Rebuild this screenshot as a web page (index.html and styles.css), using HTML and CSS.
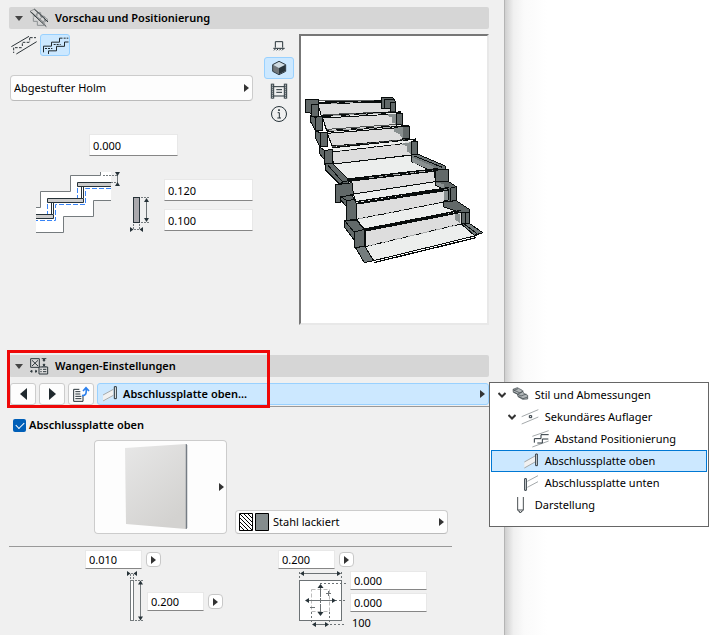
FILE: index.html
```html
<!DOCTYPE html>
<html lang="de">
<head>
<meta charset="utf-8">
<meta name="viewport" content="width=device-width, initial-scale=1">
<title>Wangen-Einstellungen</title>
<link rel="stylesheet" href="styles.css">
</head>
<body>
<main class="panel">
  <section class="preview">
    <h2 class="section-head">
      <span class="caret"></span>
      <svg width="20" height="20" viewBox="87 24 60 60" fill="none" stroke="#30383c" stroke-width="3"><path d="M90 34l12-6 42 31-12 8zM96 38l40 34M104 48l14-12M116 60l14-12M126 68l14-12" stroke="#96999a"/><path d="M98 48h13v-10h11v12h12v12h10M100 52v12h12v12h20" stroke="#8b9092"/><path d="M91 35l48 45M103 27l41 39"/></svg>
      Vorschau und Positionierung
    </h2>
    <div class="preview-body">
      <div class="controls">
        <div class="modes">
          <button class="mode" aria-label="Gerader Holm"><svg width="28" height="20" viewBox="32 104 84 60" fill="none" stroke="#2c3438" stroke-width="3"><path d="M33 139L86 108M48 161l61-37"/><path d="M89 112h18M88 112v13M87 126H66v14M64 142H40v16" stroke-dasharray="8 4"/></svg></button>
          <button class="mode active" aria-label="Abgestufter Holm"><svg width="28" height="20" viewBox="120 103 84 60" fill="none" stroke="#20292e" stroke-width="3"><path d="M127.500 155v-18.500h24v-12h24v-12h9M142.500 160v-9.500h24v-13.500h24v-13h12"/><path d="M188 112.500h14M132 143.500h22M158 131.500h21" stroke-dasharray="6 3"/></svg></button>
        </div>
        <div class="select wide"><select aria-label="Holmtyp"><option>Abgestufter Holm</option></select></div>
        <input class="field offset" aria-label="Abstand" value="0.000">
        <div class="dims">
          <svg width="84" height="64" viewBox="36 170 84 64" fill="none" stroke="#263238">
            <path d="M36 208h4.500v-16.500h30v-16h30V172H111v28.500H93.500v16h-30v16H36z" fill="#fff" stroke="none"/>
            <path d="M36 207.500h4.500v-16h30v-16h30V172M36 232.500h27.500v-16h30v-16H111" stroke="#757b7e"/>
            <path d="M111 182.500H77.500v4H111M83.500 198.500h-36v4h36zM36 214.500h17.500v4H36" fill="#ccc"/>
            <path d="M81.500 187v11M83.500 187v11M51.500 203v11M53.500 203v11"/>
            <path d="M77.500 188v10M47.500 204v10M111 188.500H85.500v16h-30v16H36" stroke="#3884f7" stroke-dasharray="5 2"/>
            <path d="M103 175.500h14M111 182.500h6" stroke="#757b7e" stroke-dasharray="2 1"/><path d="M117.500 175v8" stroke="#757b7e"/>
            <path d="M115 172h5l-2.500 4zM115 186h5l-2.500-4z" fill="#263238" stroke="none"/>
          </svg>
          <svg class="section-icon" width="20" height="38" viewBox="130 195 20 38" fill="none" stroke="#263238">
            <rect x="133.500" y="197.500" width="6" height="25" fill="#aaa9ad"/>
            <path d="M141 197.500h9M141 222.500h9M133.500 224v6M139.500 224v6M134 229.500h6" stroke="#757b7e" stroke-dasharray="2 1"/><path d="M146.500 199v22" stroke="#6b7174"/>
            <path d="M144 202h5l-2.500-4zM144 218h5l-2.500 4zM130 227v5l3.500-2.500zM143 227v5l-3.500-2.500z" fill="#263238" stroke="none"/>
          </svg>
          <div class="stack"><input class="field" aria-label="Höhe" value="0.120"><input class="field" aria-label="Breite" value="0.100"></div>
        </div>
      </div>
      <div class="views">
        <button aria-label="Seitenansicht"><svg width="30" height="22" viewBox="27 12 90 66" fill="none" stroke="#263238" stroke-width="3"><path d="M61 53V35h22v18M55 55h34"/><path d="M57 61l4-4M65 61l4-4M73 61l4-4M81 61l4-4"/></svg></button>
        <button class="active" aria-label="3D-Ansicht"><svg width="28" height="20" viewBox="30 85 84 60"><path d="M72 96l19 9-19 10-18-10z" fill="#d0dbe1"/><path d="M54 105l18 10v19l-18-9z" fill="#72777a"/><path d="M91 105l-19 10v19l19-10z" fill="#29343b"/><path d="M72 95l20 10v20l-20 10-19-10v-20z" fill="none" stroke="#29343b" stroke-width="3"/></svg></button>
        <button aria-label="Darstellung"><svg width="30" height="22" viewBox="27 151 90 66" fill="none" stroke="#263238" stroke-width="3"><path d="M49 162v45M56 162v45M88 162v45M95 162v45M56 171h32M56 199h32M64 180h17M64 188h17"/><path d="M52.500 162v45M91.500 162v45" stroke-dasharray="3 3"/></svg></button>
        <button aria-label="Information"><svg width="30" height="22" viewBox="27 219 90 66" fill="none" stroke="#263238" stroke-width="3"><circle cx="72" cy="252" r="22.500"/><path d="M68 248h5v16M67 264h11"/><path d="M72 238v5" stroke-width="5"/></svg></button>
      </div>
      <div class="viewport">
        <svg class="model" width="185" height="287" viewBox="15 18 555 861" stroke="#080c0c" stroke-width="3" shape-rendering="crispEdges">
          <g fill="#eceeed" stroke="none"><path d="M78 256l206-12 18 8-222 12zM92 300l216-14 14 8-228 16zM106 346l230-18 12 10-240 26z"/></g>
          <g fill="#ddd">
            <path d="M66 222L262 216h22v30L76 258zM80 264l220-12v36L92 302zM94 310l226-18v38l-212 18zM108 366l237-28v37l-233 27zM155 452l260-34 3 38-246 36zM180 520l270-42-5 40-263 50zM207 600l288-54v38L207 650z"/>
          </g>
          <g fill="#eceeed">
            <path d="M112 402l238-27 78 43-278 32zM172 492l246-37 44 20-282 45zM182 568l263-52 50 29-290 55zM207 650l288-68 45 35-307 75z"/>
          </g>
          <g fill="#626969">
            <path d="M28 208h38v50H46v-8l-18-4zM44 258l14 4 20-4v42H58l-14-24zM58 302l14 6 22-2v42H70l-12-26zM70 350l16 12 22-4 2 44H86V390l-16-20z"/>
            <path d="M88 402l22-2 48 50-3 12-23 2-44-44z"/><path d="M118 465l50-7 4 34-22 8-16 16h-16z"/>
            <path d="M134 500l34-4 12 24v50l-28 2v-42l-18-20zM146 572l32-4 28 30v52l-32 2v-22l-28-38z"/>
            <path d="M178 652l29-2 26 42-28 6z" fill="#757d7e"/>
            <path d="M256 202h34l8 12v32h-14v-10h-28zM300 250h20v36l-20-4zM320 290h20v36h-20zM345 334h19v40h-19z"/>
            <path d="M345 375l19-3 84 36v10l-33 8-70-32z" fill="#707879"/><path d="M418 420l40-2v37l-40 11z"/>
            <path d="M418 455h40l23 15v40l-19 5-17-5v-32l-27-12zM442 515l39-3 39 26v42l-24 2v-34l-54-18z"/>
            <path d="M496 582l24-2 40 28-25 8z" fill="#757d7e"/>
          </g>
          <g fill="#899090" stroke="none"><path d="M275 252l25-1v31l-12-4v-15l-13-5zM294 294l26-3v35l-10-14-16-8zM318 339l27-4v37l-13-9v-15l-14-4zM348 382l65 28v14l-65-28zM420 458l24 4v15l-24-12zM445 478h14v34l-14-3zM476 548l17 5v27l-17-12z"/></g>
          <g fill="none">
            <path d="M46 222v28M46 222h20M58 262v38M72 308v40M86 362v40M96 406l44 50 18-4M132 464l8-10M152 530v-18l28-4M134 500l18 12M174 606v46M174 606l32-8M146 572l28 34M264 208v28M264 208h26M284 236v-20h14M298 246l22 4M320 286l20 4M340 326l24 8M355 378l84 34M458 476v34M462 474v40M481 470l-19 5M496 548h24M508 546v34M496 582l39 34M502 580l42 32"/>
            <path d="M66 217l192-4M66 221l190-6M80 259l236-13M94 304l244-17M108 353l253-26M155 447l270-31M180 515l278-42M207 597l288-56M233 698l307-75" stroke-width="4"/>
            <path d="M106 220l90-5M110 258l150-9M100 302l200-12M120 348l200-18M120 362l220-25M210 445l180-22M190 567l240-46M220 646l260-60" stroke="#fff" stroke-width="2" stroke-dasharray="24 16"/>
            <path d="M66 213l192-2M80 254l220-9M94 298l226-16M108 349l237-22" stroke-width="2"/>
            <path d="M155 454l270-32M180 522l278-42M207 603l288-56" stroke-width="4"/>
          </g>
        </svg>
      </div>
    </div>
  </section>

  <section class="settings">
    <h2 class="section-head">
      <span class="caret"></span>
      <svg width="20" height="18" viewBox="87 36 60 54" fill="none" stroke="#2d373c" stroke-width="3"><path d="M92 41h26v26H92zM96 46l18 17M114 46L96 63M125 41h14M125 66h14M132 44v6M132 56v6M91 79h5M106 79h5"/><path d="M129 46h6l-3-4zM129 59h6l-3 4zM96 76v6l-4-3zM107 76v6l4-3z"/><path d="M117 66h26v21h-26z" fill="#ddd"/><path d="M121 73h4M129 73h10M121 80h4M129 80h10"/></svg>
      Wangen-Einstellungen
    </h2>
    <div class="pager">
      <button class="page" aria-label="Zurück"><i class="tri left"></i></button>
      <button class="page" aria-label="Weiter"><i class="tri"></i></button>
      <button class="page" aria-label="Seitenliste"><svg width="20" height="18" viewBox="212 120 60 54" fill="none" stroke="#263238" stroke-width="3"><path d="M237 133h-17v36h28v-17M225 140h15M225 147h15M225 154h18M225 161h18"/><path d="M245 152c13 0 13-7 13-23M248 138l9-10 9 10" stroke="#2c80ed" stroke-width="5"/></svg></button>
      <button class="page current" aria-haspopup="true"><svg width="17" height="18" viewBox="306 120 51 54" fill="none" stroke="#a5abae" stroke-width="3"><path d="M309 150l31-17v20l-31 17z" fill="#f1f1f1" stroke="none"/><path d="M309 150l31-17M309 168l31-17"/><path d="M343 125h6v36h-6z" fill="#fff" stroke="#263238"/></svg><span>Abschlussplatte oben...</span><i class="tri tiny"></i></button>
    </div>
    <div class="marker"></div>
    <label class="check"><input type="checkbox" checked>Abschlussplatte oben</label>
    <div class="material">
      <button class="swatch" aria-label="Material wählen"><svg width="133" height="94" viewBox="94 440 133 94"><defs><linearGradient id="plate" x2=".6" y2="1"><stop stop-color="#e7e7e7"/><stop offset="1" stop-color="#d3d2d0"/></linearGradient></defs><path d="M125 448l61-4v85l-60-5z" fill="url(#plate)"/><path d="M186 444l1 1v83l-1 1z" fill="#777c84" stroke="#777c84" stroke-width=".5"/></svg><i class="tri tiny"></i></button>
      <div class="select surface">
        <svg width="31" height="18" viewBox="0 0 31 18" stroke="#000"><path d="M.5.500h13v17H.5z" fill="#fff"/><path d="M1 13l4 4M1 9l8 8M1 5l12 12M1 1l12 12M5 1l8 8M9 1l4 4" stroke-width="1"/><path d="M16.500.500h13v17h-13z" fill="#848c8d"/></svg>
        <select aria-label="Oberfläche"><option>Stahl lackiert</option></select>
      </div>
    </div>
    <hr>
    <div class="plate-dims">
      <div class="group">
        <div class="line"><input class="field small" aria-label="Stärke" value="0.010"><button class="mini" aria-label="Stärke Optionen"><i class="tri tiny"></i></button></div>
        <div class="line tall">
          <svg width="20" height="54" viewBox="125 570 20 54" fill="none" stroke="#757b7e"><rect x="130.500" y="581.500" width="3" height="40" fill="#fff"/><path d="M130.500 575v6M133.500 575v6M135 581.500h8M135 621.500h8M131 574.500h4" stroke-dasharray="2 1"/><path d="M140.500 584v36"/><path d="M127 572v5l3.500-2.500zM137 572v5l-3.500-2.500zM138 585.500h5l-2.500-4zM138 617.500h5l-2.500 4z" fill="#263238" stroke="none"/></svg>
          <input class="field small" aria-label="Höhe der Platte" value="0.200"><button class="mini" aria-label="Höhe Optionen"><i class="tri tiny"></i></button>
        </div>
      </div>
      <div class="group">
        <div class="line"><input class="field small" aria-label="Breite der Platte" value="0.200"><button class="mini" aria-label="Breite Optionen"><i class="tri tiny"></i></button></div>
        <div class="line anchor">
          <svg width="49" height="60" viewBox="298 570 49 60" fill="none" stroke="#6c7275"><rect x="299.500" y="581.500" width="42" height="40" fill="#fff"/><path d="M299.500 573v7M341.500 573v7M311.500 613v12M329.500 613v12M320 584.500h26M335 601.500h11M330 625.500h16" stroke-dasharray="2 2"/><path d="M311.500 590.500h18v22h-18z" stroke="#bbb" stroke-dasharray="4 2"/><path d="M302 574.500h37M306 601.500h12M323 601.500h12M320.500 586v12M320.500 605v11M315 625.500h12M320.500 599v5M318 601.500h5M326 594.500h5M328.500 592v5M310 608.500h5"/><path d="M300 574.500l4-2.500v5zM341 574.500l-4-2.500v5zM305 601.500l4-2.500v5zM336 601.500l-4-2.500v5zM320.500 585l-3 4h6zM320.500 617l-3-4h6zM312 625.500l4-2.500v5zM329 625.500l-4-2.500v5z" fill="#263238" stroke="none"/></svg>
          <div class="stack tight"><input class="field mid" aria-label="Versatz X" value="0.000"><input class="field mid" aria-label="Versatz Y" value="0.000"><span class="angle">100</span></div>
        </div>
      </div>
    </div>
  </section>

  <ul class="menu" role="tree" aria-label="Seiten">
    <li role="treeitem" class="level-0"><svg class="chevron" width="8" height="8" viewBox="0 0 8 8"><path d="M.5 2l3.500 3.500L7.500 2"/></svg><svg width="20" height="18" viewBox="80 36 60 54" stroke="#394247" stroke-width="2" fill="#b0b5b7"><path d="M86 46l13-5 15 8 4 9 12 6v11l-15 1-14-8-2-8-12-5z"/><path d="M86 47l21 10 10-6M88 54l22 12 16-6M102 67l14 7 14-5M89 49l12-5M101 60l12-6" fill="none"/></svg>Stil und Abmessungen</li>
    <li role="treeitem" class="level-1"><svg class="chevron" width="8" height="8" viewBox="0 0 8 8"><path d="M.5 2l3.500 3.500L7.500 2"/></svg><svg width="20" height="18" viewBox="108 99 60 54" fill="none" stroke="#a4a9ab" stroke-width="3"><path d="M110 125l50-21M110 147l50-21"/><path d="M133 122h7v6h-7z" stroke="#29343b"/></svg>Sekundäres Auflager</li>
    <li role="treeitem" class="level-2"><svg width="20" height="18" viewBox="138 165 60 54" fill="none" stroke="#a4a9ab" stroke-width="3"><path d="M142 184l49-17M142 216l49-18"/><path d="M148 203v-12h20v-12h23M157 204h15v-12h18" stroke="#29343b"/></svg>Abstand Positionierung</li>
    <li role="treeitem" class="level-1 chosen" aria-selected="true"><svg width="20" height="18" viewBox="108 231 60 54" fill="none" stroke="#a4a9ab" stroke-width="3"><path d="M118 261l32-18v18l-32 18z" fill="#f1f1f1" stroke="none"/><path d="M118 261l32-18M118 279l32-18"/><path d="M152 237h5v35h-5z" fill="#fff" stroke="#29343b"/></svg>Abschlussplatte oben</li>
    <li role="treeitem" class="level-1"><svg width="20" height="18" viewBox="108 297 60 54" fill="none" stroke="#a4a9ab" stroke-width="3"><path d="M127 319l32-17M127 337l32-17"/><path d="M119 311h5v35h-5z" fill="#fff" stroke="#29343b"/></svg>Abschlussplatte unten</li>
    <li role="treeitem" class="level-0"><svg width="20" height="18" viewBox="78 363 60 54" fill="none" stroke="#4b5154" stroke-width="3"><path d="M98 366v39l8 9 9-9v-39M98 405h17M103 408l3 5 5-5"/></svg>Darstellung</li>
  </ul>
</main>
</body>
</html>
```
FILE: styles.css
```css
* { box-sizing: border-box; }
body {
  margin: 0;
  color: #000;
  background: linear-gradient(90deg, #cfcfcf, #f0f0f0 4%, #fafafa 9%, #fff 20%) no-repeat 100% 0 / 29.5% 100%;
  font: 11px/16px "Noto Sans", "Open Sans", sans-serif;
}
.panel {
  position: relative;
  width: 70.5%;
  min-width: 500px;
  min-height: 100vh;
  padding: 7px 15px 4px 9px;
  background: #f0f0f0;
  border-right: 1px solid #b4b4b4;
}
svg { display: block; flex: none; }
button, input, select { margin: 0; font: inherit; color: inherit; }
button { padding: 0; border: 0; background: none; }
.section-head {
  display: flex;
  align-items: center;
  height: 22px;
  margin: 0;
  padding-left: 6px;
  gap: 6px;
  background: #d6d6d6;
  border-radius: 2px;
  font-size: 11px;
  font-weight: 600;
}
.caret {
  border: solid transparent;
  border-width: 5px 4px 0;
  border-top-color: #444;
}
.preview-body { display: flex; margin-top: 5px; }
.controls { flex: 1; padding-left: 1px; }
.modes { display: flex; }
.mode { display: grid; place-items: center; width: 30px; height: 22px; border: 1px solid transparent; border-radius: 3px; }
.active { background: #cce8ff; border: 1px solid #99d1ff; border-radius: 3px; }
.select {
  position: relative;
  display: flex;
  align-items: center;
  background: #fdfdfd;
  border: 1px solid #ccc;
  border-bottom-color: #bbb;
  border-radius: 4px;
}
.select::after {
  content: "";
  position: absolute;
  right: 3px;
  border: solid transparent;
  border-width: 4px 0 4px 5px;
  border-left-color: #333;
}
.select select { flex: 1; min-width: 0; height: 100%; padding: 0 12px 0 3px; border: 0; background: none; appearance: none; }
.wide { height: 26px; margin-top: 19px; }
.surface { width: 213px; height: 24px; padding-left: 3px; }
.field {
  display: block;
  width: 89px;
  height: 22px;
  padding: 0 3px;
  border: 1px solid #e8e8e8;
  border-bottom-color: #868686;
  background: #fff;
  border-radius: 0;
}
.small { width: 57px; height: 19px; }
.mid { width: 77px; height: 19px; }
.offset { margin: 33px 0 0 79px; }
.dims { display: flex; gap: 10px; margin-top: 14px; padding-left: 26px; }
.section-icon { margin-top: 25px; }
.stack { display: flex; flex-direction: column; gap: 8px; padding: 9px 0 0 4px; }
.views { display: flex; flex-direction: column; gap: 1px; margin: 0 5px 0 11px; }
.views button { display: grid; place-items: center; width: 30px; height: 22px; }
.viewport {
  width: 190px;
  height: 291px;
  background: #fff;
  border: 2px solid;
  border-color: #777 #e8e8e8 #e8e8e8 #777;
}
.settings { position: relative; margin-top: 30px; }
.pager { display: flex; gap: 3px; padding: 6px 0 1px 1px; border-bottom: 1px solid #999; }
.page { display: grid; place-items: center; width: 26px; height: 22px; background: #fdfdfd; border: 1px solid #ccc; border-radius: 3px; }
.tri { border: solid transparent; border-width: 6px 0 6px 7px; border-left-color: #20292e; }
.tri.left { transform: rotate(180deg); }
.tri.tiny { border-width: 4px 0 4px 5px; border-left-color: #333; }
.current {
  display: flex;
  align-items: center;
  flex: 1;
  gap: 4px;
  padding: 0 3px 0 4px;
  background: #cce8ff;
  border-color: #99d1ff;
  font-weight: 600;
}
.current span { flex: 1; text-align: left; }
.marker {
  position: absolute;
  top: -5px;
  left: -2px;
  width: 263px;
  height: 58px;
  border: 3px solid #ef0808;
}
.check { display: flex; align-items: center; gap: 3px; margin: 10px 0 7px 4px; font-weight: 600; }
.check input {
  width: 13px;
  height: 13px;
  border-radius: 2px;
  appearance: none;
  background: #005fb8;
}
.check input:checked::after {
  content: "";
  display: block;
  width: 7px;
  height: 4px;
  margin: 3px;
  border: solid #fff;
  border-width: 0 0 1px 1px;
  transform: rotate(-45deg);
}
.material { display: flex; align-items: flex-end; gap: 8px; padding-left: 85px; }
.swatch { position: relative; width: 133px; height: 94px; background: #fdfdfd; border-radius: 4px; box-shadow: inset 0 0 0 1px #ccc; }
.swatch .tri { position: absolute; right: 3px; top: 43px; }
hr { margin: 12px 37px 3px 0; border: 0; border-top: 1px solid #999; }
.plate-dims { display: grid; grid-template-columns: 193px 1fr; padding-left: 76px; }
.line { display: flex; align-items: center; gap: 4px; }
.mini { display: grid; place-items: center; width: 15px; height: 15px; background: #fff; border: 1px solid #c8c8c8; border-radius: 4px; }
.tall { padding-left: 40px; }
.tall svg { margin-right: -2px; }
.tall .field, .tall .mini { margin-top: 11px; }
.anchor { align-items: flex-start; gap: 3px; padding-left: 20px; }
.tight { gap: 3px; padding: 2px 0 0; }
.angle { padding-left: 2px; }
.menu {
  position: absolute;
  top: 382px;
  left: calc(100% - 15px);
  width: 220px;
  height: 145px;
  margin: 0;
  padding: 1px;
  list-style: none;
  background: #fff;
  border: 1px solid #666;
}
.menu li { display: flex; align-items: center; gap: 4px; height: 22px; white-space: nowrap; border: 1px solid transparent; }
.menu .level-0 { padding-left: 19px; }
.menu .level-1 { padding-left: 29px; }
.menu .level-2 { padding-left: 39px; }
.menu .chosen { background: #cce8ff; border-color: #0078d4; }
.menu .chevron { margin: 0 1px 0 -13px; fill: none; stroke: #333; stroke-width: 2; }
```
